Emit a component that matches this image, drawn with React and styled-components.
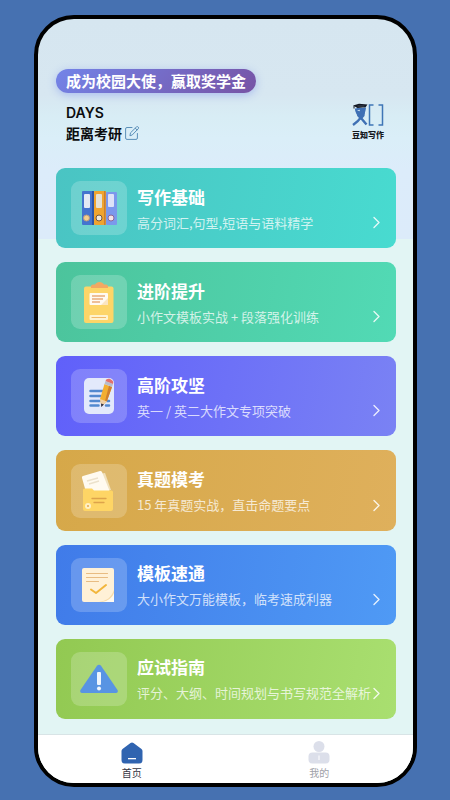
import React from "react";
import styled, { createGlobalStyle } from "styled-components";

const GlobalStyle = createGlobalStyle`
    * {
        box-sizing: border-box;
    }

    body {
        margin: 0;
        background: #4671b1;
        font-family: "Noto Sans CJK SC", "Noto Sans", sans-serif;
    }

    a {
        color: inherit;
        text-decoration: none;
    }

    button {
        border: 0;
        padding: 0;
        background: none;
        color: inherit;
        font: inherit;
        cursor: pointer;
    }

    svg {
        display: block;
        flex: none;
    }
`;

const lessons = [
    {
        title: "写作基础",
        text: "高分词汇,句型,短语与语料精学",
        from: "#4ac4c3",
        to: "#48dbd0",
        icon: "binders",
    },
    {
        title: "进阶提升",
        text: "小作文模板实战 + 段落强化训练",
        from: "#4cc49c",
        to: "#52dab5",
        icon: "clipboard",
    },
    {
        title: "高阶攻坚",
        text: "英一 / 英二大作文专项突破",
        from: "#6060fa",
        to: "#7a82f4",
        icon: "pencil",
    },
    {
        title: "真题模考",
        text: "15 年真题实战，直击命题要点",
        from: "#d6a849",
        to: "#dfb05c",
        icon: "folder",
    },
    {
        title: "模板速通",
        text: "大小作文万能模板，临考速成利器",
        from: "#407be9",
        to: "#4f9af5",
        icon: "paper",
    },
    {
        title: "应试指南",
        text: "评分、大纲、时间规划与书写规范全解析",
        from: "#92c952",
        to: "#a9df70",
        icon: "warning",
    },
];

const App = () => {
    return (
        <>
            <GlobalStyle />
            <Page>
                <Phone>
                    <Header>
                        <Promo type="button">成为校园大使，赢取奖学金</Promo>
                        <HeaderRow>
                            <Countdown>
                                <Days>DAYS</Days>
                                <CountdownRow>
                                    距离考研
                                    <button type="button" aria-label="编辑">
                                        <EditIcon />
                                    </button>
                                </CountdownRow>
                            </Countdown>
                            <Brand>
                                <BrandMark />
                                <BrandName>豆知写作</BrandName>
                            </Brand>
                        </HeaderRow>
                    </Header>
                    <Lessons>
                        {lessons.map((lesson) => (
                            <Lesson key={lesson.title} {...lesson} />
                        ))}
                    </Lessons>
                    <TabBar>
                        <Tab href="#home" $active>
                            <HomeIcon />
                            首页
                        </Tab>
                        <Tab href="#me">
                            <UserIcon />
                            我的
                        </Tab>
                    </TabBar>
                </Phone>
            </Page>
        </>
    );
};

export default App;

function Lesson({ title, text, from, to, icon }) {
    const Drawing = drawings[icon];

    return (
        <LessonCard href={`#${icon}`} $from={from} $to={to}>
            <IconTile>
                <svg width="56" height="54" viewBox="0 0 56 54" fill="none">
                    <Drawing />
                </svg>
            </IconTile>
            <LessonBody>
                <LessonTitle>{title}</LessonTitle>
                <LessonRow>
                    <LessonText>{text}</LessonText>
                    <Chevron />
                </LessonRow>
            </LessonBody>
        </LessonCard>
    );
}

const Chevron = () => (
    <svg width="9" height="13" viewBox="0 0 9 13" fill="none">
        <path
            d="M2 1.5l5 5-5 5"
            stroke="#fff"
            strokeOpacity="0.85"
            strokeWidth="1.4"
            strokeLinecap="round"
            strokeLinejoin="round"
        />
    </svg>
);

const EditIcon = () => (
    <svg width="14" height="14" viewBox="0 0 14 14" fill="none">
        <g stroke="#5b8fb8" strokeLinecap="round" strokeLinejoin="round">
            <path d="M7 1.5H2A1.4 1.4 0 0 0 .6 3v9A1.4 1.4 0 0 0 2 13.4h9a1.4 1.4 0 0 0 1.4-1.4V7.5" />
            <path d="M5 9.4l.5-2.6L11.4 1a1.2 1.2 0 0 1 1.8 0 1.2 1.2 0 0 1 0 1.8L7.5 8.7z" />
            <path d="M10.3 2.2l1.7 1.7" />
        </g>
    </svg>
);

// Scholar figure with a cap, next to an open door frame
const BrandMark = () => (
    <svg width="32" height="24" viewBox="0 0 32 24" fill="none">
        <path
            d="M4 5.5C4.2 8.5 6 12 9 15l5.5 6.5M12.8 4.500C12.5 10 8 17 1 22"
            stroke="#3f70b4"
            strokeWidth="2.4"
        />
        <path d="M4.500 5h9l-1 8-3.500 4-3.800-4z" fill="#3f70b4" />
        <path d="M5 7.500l3-.8-.5 1.500z" fill="#d8eaf5" />
        <path d="M1 2.500L7 .8l8.500.7-2 2.700-8 .9z" fill="#121722" />
        <path d="M5.500 3h7" stroke="#5d6675" strokeWidth="0.6" />
        <path d="M2 3v2.500" stroke="#121722" />
        <path
            d="M21.500 2h-4v20h4M26.500 2h4v20h-4"
            stroke="#3f76b6"
            strokeWidth="1.500"
        />
    </svg>
);

const HomeIcon = () => (
    <svg width="22" height="22" viewBox="0 0 22 22">
        <path
            d="M9.500 1.100a2.600 2.600 0 0 1 3 0l8 6a2.500 2.500 0 0 1 1 2V18a3.500 3.500 0 0 1-3.500 3.500H4A3.500 3.500 0 0 1 .5 18V9.100a2.500 2.500 0 0 1 1-2z"
            fill="#3064b0"
        />
        <rect x="7" y="16" width="8" height="1.300" fill="#fff" />
    </svg>
);

const UserIcon = () => (
    <svg width="22" height="24" viewBox="0 0 22 24">
        <circle cx="11" cy="6.500" r="5.500" fill="#dcdfea" />
        <rect x="0.500" y="12.500" width="21" height="11" rx="4" fill="#dcdfea" />
        <rect x="10.500" y="15.500" width="1" height="4.500" fill="#fff" />
    </svg>
);

const drawings = {
    binders: () => (
        <>
            <rect x="11" y="10" width="12" height="34" rx="1" fill="#4474ce" />
            <path d="M21 10h2v34h-2z" fill="#2f55a4" />
            <rect x="23" y="10" width="12" height="34" rx="1" fill="#f0a42e" />
            <path d="M33 10h1.500v34H33z" fill="#c57f35" />
            <rect x="35" y="11" width="11" height="33" rx="1" fill="#7b98ec" />
            <rect x="13" y="13" width="6" height="14" rx="1" fill="#e3e9f4" />
            <rect x="25" y="13" width="6" height="14" rx="1" fill="#e6e1d2" />
            <rect x="37" y="13" width="6" height="13" rx="1" fill="#dde2f8" />
            <circle cx="15.500" cy="37" r="3" fill="#f5cf8b" stroke="#b79a80" />
            <circle cx="28" cy="37" r="3" fill="#f1eadc" stroke="#74563f" />
            <circle cx="40" cy="37" r="3" fill="#f4e4e6" stroke="#8c6699" />
        </>
    ),
    clipboard: () => (
        <>
            <rect x="13" y="11.500" width="29.500" height="36.500" rx="2" fill="#fdd567" />
            <path
                d="M20 13v-1.500a2 2 0 0 1 2-2h2C25 8 26.500 7 28.500 7S32 8 33 9.500h2a2 2 0 0 1 2 2V13z"
                fill="#f3a862"
            />
            <rect x="18.500" y="18" width="18.500" height="12" rx="1" fill="#fffaf0" />
            <path
                d="M21 21h13M21 24h11M21 27h8"
                stroke="#e9ac79"
                strokeWidth="1.500"
            />
            <path d="M37 23v7h-7z" fill="#fbe5bf" />
            <rect x="18.500" y="40" width="18.500" height="5" rx="1" fill="#fff3cd" />
            <path d="M20.500 42.500h14.500" stroke="#f2b967" />
        </>
    ),
    pencil: () => (
        <>
            <rect x="13" y="9" width="30" height="36" rx="5" fill="#e3e9fb" />
            <path
                d="M19.500 22h12M19.500 27h10M19.500 32h9M19.500 36.500h8M36 32h2M35 36.500h3"
                stroke="#5389cf"
                strokeWidth="2.500"
                strokeLinecap="round"
            />
            <path d="M33.500 15l7.500 3-5 14-5.500 5.500-1.500-7.500z" fill="#f2ae32" />
            <path d="M38 16.800l3 1.200-5 14-2.500 2z" fill="#cf7f2f" />
            <path d="M29 30l7 2.500-5.500 5z" fill="#efcfa6" />
            <path d="M30 34.500l3 1-2.700 2.500z" fill="#303247" />
            <path d="M33.500 15l1-3 7.500 3-1 3z" fill="#b7bccd" />
            <path d="M34.500 12c.7-2 2.500-2.800 5-1.800s3.200 2.700 2.500 4.800z" fill="#e2716b" />
        </>
    ),
    folder: () => (
        <>
            <path d="M17 12l17-3 6 17H22z" fill="#f1e1bd" />
            <path
                d="M11 14a1.500 1.500 0 0 1 1-2L29 7a2 2 0 0 1 2 1l8 20H15z"
                fill="#fffaf0"
            />
            <path d="M16 17l11-3M18 20l10-3" stroke="#ece1cb" strokeWidth="1.500" />
            <path
                d="M12 26a1.500 1.500 0 0 1 1.500-1.500H21l2 2h17.500A1.500 1.500 0 0 1 42 28v17a2 2 0 0 1-2 2H14a2 2 0 0 1-2-2z"
                fill="#fed565"
            />
            <path
                d="M21 34.500h14M23 38.500h10"
                stroke="#dda34b"
                strokeWidth="1.300"
                strokeLinecap="round"
            />
            <circle cx="17" cy="42" r="3" fill="#fff0c4" />
            <circle cx="17" cy="42" r="1" fill="#e6a84d" />
        </>
    ),
    paper: () => (
        <>
            <path
                d="M13 10h28a2 2 0 0 1 2 2v32H13a2 2 0 0 1-2-2V12a2 2 0 0 1 2-2z"
                fill="#fff1d7"
            />
            <path d="M43 32v12H28c7-1 12-4 15-12z" fill="#f6dba9" />
            <path d="M43 35v9H31c6-1 10-4 12-9z" fill="#fffaf0" />
            <path
                d="M15.500 15.500h21M15.500 19.500h21M15.500 23.500h12"
                stroke="#e8bc82"
                strokeWidth="1.200"
                strokeLinecap="round"
            />
            <path
                d="M20 31.500l5 3.500 10-8"
                stroke="#f2b63c"
                strokeWidth="2"
                strokeLinecap="round"
                strokeLinejoin="round"
            />
        </>
    ),
    warning: () => (
        <>
            <path
                d="M26 13.800a2.500 2.500 0 0 1 4 0L46.500 38c1 1.500 0 3-1.500 3H11c-1.500 0-2.500-1.500-1.500-3z"
                fill="#5894e3"
            />
            <rect x="26" y="20" width="4" height="13" rx="1" fill="#eef5fd" />
            <circle cx="28" cy="36.500" r="2" fill="#eef5fd" />
        </>
    ),
};

const Page = styled.div`
    display: flex;
    min-height: 100vh;
    padding: 15px 33px 13px 34px;
`;

const Phone = styled.main`
    display: flex;
    flex: 1;
    flex-direction: column;
    min-width: 0;
    overflow: hidden;
    border: 4px solid #000;
    border-radius: 40px;
    background: linear-gradient(
        #d6e6f0 0,
        #d7e7f1 76px,
        #d8edf5 98px,
        #daeef8 120px,
        #dcecfa 150px,
        #dcebfa 220px,
        #e2f5f4 220px
    );
`;

const Header = styled.header`
    display: flex;
    flex-direction: column;
    align-items: flex-start;
    gap: 10px;
    padding: 50px 29px 25px 18px;
`;

const Promo = styled.button`
    && {
        padding: 0 10px;
        border-radius: 12px;
        background: linear-gradient(135deg, #7384e8, #7753a5);
        box-shadow: 0 2px 8px rgba(102, 126, 234, 0.4);
        color: #fff;
        font-size: 15px;
        font-weight: 700;
        line-height: 24px;
    }
`;

const HeaderRow = styled.div`
    display: flex;
    align-self: stretch;
    align-items: flex-start;
    justify-content: space-between;
    padding-left: 10px;
`;

const Countdown = styled.div`
    display: flex;
    flex-direction: column;
    color: #0b0c0e;
    font-size: 14px;
    font-weight: 700;
    line-height: 20px;
`;

const Days = styled.span`
    font-family: Inter, sans-serif;
    font-weight: 600;
`;

const CountdownRow = styled.div`
    display: flex;
    align-items: center;
    gap: 3px;
`;

const Brand = styled.div`
    display: flex;
    flex-direction: column;
    align-items: center;
    gap: 2px;
`;

const BrandName = styled.span`
    color: #15181e;
    font-size: 8px;
    font-weight: 900;
    line-height: 12px;
`;

const Lessons = styled.section`
    display: grid;
    flex: 1;
    grid-auto-rows: 1fr;
    gap: 14px;
    padding: 0 17px 15px 18px;
`;

const LessonCard = styled.a`
    display: flex;
    align-items: center;
    gap: 10px;
    min-height: 80px;
    padding: 0 15px;
    border-radius: 9px;
    background: linear-gradient(
        100deg,
        ${({ $from }) => $from},
        ${({ $to }) => $to}
    );
    color: #fff;
`;

const IconTile = styled.span`
    border-radius: 9px;
    background: rgba(255, 255, 255, 0.2);
`;

const LessonBody = styled.div`
    display: flex;
    flex: 1;
    flex-direction: column;
    gap: 5px;
    min-width: 0;
`;

const LessonTitle = styled.h2`
    margin: 0;
    font-size: 17px;
    font-weight: 700;
    line-height: 24px;
`;

const LessonRow = styled.div`
    display: flex;
    align-items: center;
    justify-content: space-between;
`;

const LessonText = styled.span`
    color: rgba(255, 255, 255, 0.75);
    font-size: 13px;
    line-height: 18px;
    white-space: nowrap;
`;

const TabBar = styled.nav`
    display: flex;
    height: 49px;
    border-top: 1px solid #d8e4e6;
    background: #fff;
`;

const Tab = styled.a`
    display: flex;
    flex: 1;
    flex-direction: column;
    align-items: center;
    justify-content: flex-end;
    gap: 2px;
    padding-bottom: 3px;
    color: ${({ $active }) => ($active ? "#34343f" : "#a0a1a8")};
    font-size: 10px;
    line-height: 14px;
`;
